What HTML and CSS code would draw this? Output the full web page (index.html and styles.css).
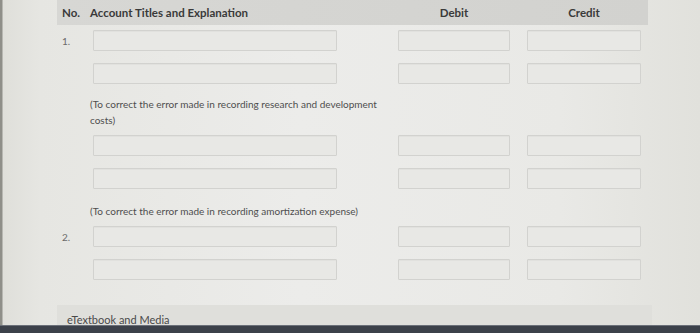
FILE: index.html
```html
<!DOCTYPE html>
<html>
<head>
<meta charset="utf-8">
<link rel="stylesheet" href="styles.css">
</head>
<body>
<div class="screen">
  <div class="sheet">
    <div class="grid head">
      <div class="h-no">No.</div>
      <div class="h-acc">Account Titles and Explanation</div>
      <div class="h-amt">Debit</div>
      <div class="h-amt">Credit</div>
    </div>

    <div class="entry e1">
      <div class="grid row">
        <div class="num">1.</div>
        <div class="cell"><div class="box acc"></div></div>
        <div class="box"></div>
        <div class="box"></div>
      </div>
      <div class="grid row">
        <div class="num"></div>
        <div class="cell"><div class="box acc"></div></div>
        <div class="box"></div>
        <div class="box"></div>
      </div>
      <div class="note n1">(To correct the error made in recording research and development costs)</div>
      <div class="grid row">
        <div class="num"></div>
        <div class="cell"><div class="box acc"></div></div>
        <div class="box"></div>
        <div class="box"></div>
      </div>
      <div class="grid row">
        <div class="num"></div>
        <div class="cell"><div class="box acc"></div></div>
        <div class="box"></div>
        <div class="box"></div>
      </div>
      <div class="note n2">(To correct the error made in recording amortization expense)</div>
    </div>

    <div class="entry e2">
      <div class="grid row">
        <div class="num">2.</div>
        <div class="cell"><div class="box acc"></div></div>
        <div class="box"></div>
        <div class="box"></div>
      </div>
      <div class="grid row">
        <div class="num"></div>
        <div class="cell"><div class="box acc"></div></div>
        <div class="box"></div>
        <div class="box"></div>
      </div>
    </div>

    <div class="media">eTextbook and Media</div>
  </div>
  <div class="bezel"></div>
</div>
</body>
</html>
```

FILE: styles.css
```css
html, body {
  margin: 0;
  padding: 0;
  height: 333px;
  overflow: hidden;
}
body {
  font-family: Lato, "Open Sans", sans-serif;
  background: linear-gradient(90deg, #8f8f89 0, #8f8f89 2px, #dfdfda 3px, #e6e6e2 40px, #ececea 300px, #e9e9e6 560px, #e1e1dc 700px);
}
.screen {
  display: flex;
  flex-direction: column;
  height: 333px;
}
.sheet {
  margin-left: 57px;
  width: 591px;
  flex: 1;
  display: flex;
  flex-direction: column;
}
.grid {
  display: grid;
  grid-template-columns: 19px 288px 112px 114px;
  column-gap: 17px;
  align-items: center;
}
.head {
  height: 25px;
  background: linear-gradient(90deg, #d7d7d4, #d2d2cf);
  font-weight: 700;
  font-size: 11.5px;
  color: #3a3a3a;
}
.h-no {
  padding-left: 5px;
  white-space: nowrap;
}
.h-acc {
  margin-left: -3px;
  white-space: nowrap;
}
.h-amt {
  text-align: center;
}
.entry {
  display: flex;
  flex-direction: column;
}
.e1 {
  padding-top: 5px;
}
.row {
  height: 21px;
  margin-bottom: 12px;
}
.num {
  padding-left: 5px;
  font-size: 10px;
  color: #6a6a6a;
  white-space: nowrap;
}
.cell {
  display: flex;
}
.box {
  height: 21px;
  box-sizing: border-box;
  border: 1px solid #d2d2cf;
  border-radius: 1px;
  background: #e8e8e5;
  box-shadow: inset 0 1px 1px rgba(0,0,0,0.03);
}
.box.acc {
  width: 244px;
}
.note {
  margin-left: 33px;
  width: 296px;
  font-size: 10px;
  line-height: 16px;
  color: #4e4e4e;
}
.n1 {
  margin-bottom: 7px;
}
.n2 {
  margin-top: 2px;
  margin-bottom: 7px;
}
.media {
  margin-top: auto;
  height: 20px;
  overflow: hidden;
  box-sizing: border-box;
  padding: 8px 0 0 10px;
  width: 595px;
  font-size: 11px;
  line-height: 14px;
  color: #4a4a4a;
  background: #dfdfdb;
}
.bezel {
  height: 7px;
  background: #3c414a;
  border-top: 1px solid #6b7079;
}
```
